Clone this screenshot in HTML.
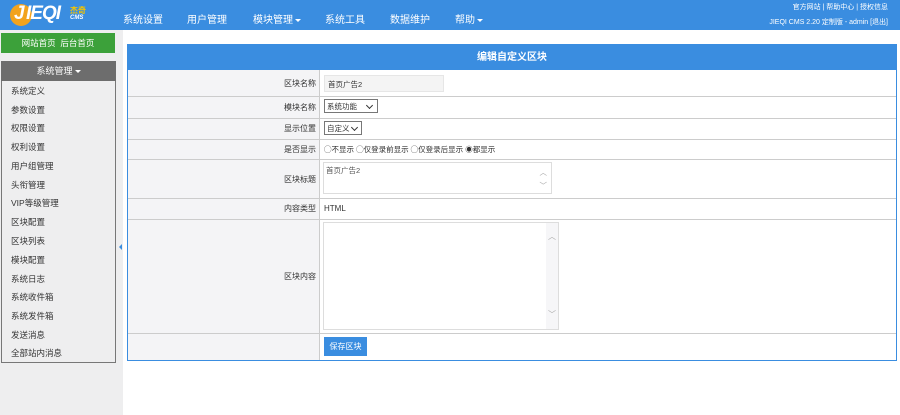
<!DOCTYPE html>
<html><head><meta charset="utf-8"><style>
*{margin:0;padding:0;box-sizing:border-box}
body{width:900px;height:415px;overflow:hidden;background:#fff;font-family:"Liberation Sans","Noto Sans CJK SC",sans-serif;font-size:8px;color:#333;position:relative}
.a{position:absolute}
#hd{left:0;top:0;width:900px;height:30px;background:#3a8de0;color:#fff}
.nav{top:11px;font-size:10px;color:#fff}
.caret{display:inline-block;border-left:3px solid transparent;border-right:3px solid transparent;border-top:3px solid #fff;vertical-align:middle;margin-left:2px}
#sb{left:0;top:30px;width:123px;height:385px;background:#eeeeef}
.mi{left:11px;font-size:8.5px;color:#333}
.lab{text-align:right;font-size:8px;color:#333}
.hl{left:128px;width:768px;height:1px;background:#ccc}
.sel{border:1px solid #777;font-size:7.5px;padding:1px 2px;background:#fff}
.ar{position:absolute;top:3px;width:5px;height:5px;border-right:1.3px solid #333;border-bottom:1.3px solid #333;transform:rotate(45deg)}
</style></head><body>
<div id="hd" class="a">
 <div class="a" style="left:10px;top:4px;width:22px;height:22px;border-radius:50%;background:#f2a31d"></div>
 <div class="a" style="left:14px;top:3px;font:italic bold 19px 'Liberation Sans',sans-serif;color:#fff">J</div>
 <div class="a" style="left:26px;top:3px;font:italic bold 19px 'Liberation Sans',sans-serif;color:#fff;letter-spacing:-1px">IEQI</div>
 <div class="a" style="left:70px;top:5px;font-size:8px;color:#f5c400;font-weight:bold">杰奇</div>
 <div class="a" style="left:70px;top:15px;font:italic bold 6px 'Liberation Sans',sans-serif;color:#fff">CMS</div>
 <div class="a nav" style="left:123px">系统设置</div>
 <div class="a nav" style="left:187px">用户管理</div>
 <div class="a nav" style="left:253px">模块管理<span class="caret"></span></div>
 <div class="a nav" style="left:325px">系统工具</div>
 <div class="a nav" style="left:390px">数据维护</div>
 <div class="a nav" style="left:455px">帮助<span class="caret"></span></div>
 <div class="a" style="right:12px;top:2px;font-size:7px">官方网站 | 帮助中心 | 授权信息</div>
 <div class="a" style="right:12px;top:17px;font-size:7px">JIEQI CMS 2.20 定制版 - admin [退出]</div>
</div>
<div id="sb" class="a"></div>
<div class="a" style="left:1px;top:33px;width:114px;height:20px;background:#3ca13a;color:#fff;font-size:8.5px;text-align:center;line-height:20px">网站首页&nbsp; 后台首页</div>
<div class="a" style="left:1px;top:61px;width:115px;height:302px;border:1px solid #777;border-top:0;background:#eeeeef"></div>
<div class="a" style="left:1px;top:61px;width:115px;height:20px;background:#6d6d6d;color:#fff;font-size:9px;text-align:center;line-height:20px">系统管理<span class="caret"></span></div>
<div class="a mi" style="top:85px">系统定义</div>
<div class="a mi" style="top:104px">参数设置</div>
<div class="a mi" style="top:122px">权限设置</div>
<div class="a mi" style="top:141px">权利设置</div>
<div class="a mi" style="top:160px">用户组管理</div>
<div class="a mi" style="top:179px">头衔管理</div>
<div class="a mi" style="top:197px">VIP等级管理</div>
<div class="a mi" style="top:216px">区块配置</div>
<div class="a mi" style="top:235px">区块列表</div>
<div class="a mi" style="top:254px">模块配置</div>
<div class="a mi" style="top:273px">系统日志</div>
<div class="a mi" style="top:291px">系统收件箱</div>
<div class="a mi" style="top:310px">系统发件箱</div>
<div class="a mi" style="top:329px">发送消息</div>
<div class="a mi" style="top:347px">全部站内消息</div>
<div class="a" style="left:119px;top:244px;border-top:3px solid transparent;border-bottom:3px solid transparent;border-right:3px solid #3a8de0"></div>

<div class="a" style="left:127px;top:44px;width:770px;height:317px;border:1px solid #3a8de0;background:#fff"></div>
<div class="a" style="left:128px;top:45px;width:768px;height:25px;background:#3a8de0;color:#fff;font-size:10px;font-weight:bold;text-align:center;line-height:26px">编辑自定义区块</div>
<div class="a" style="left:128px;top:70px;width:192px;height:290px;background:#f4f4f6;border-right:1px solid #ccc"></div>
<div class="a hl" style="top:96px"></div>
<div class="a hl" style="top:118px"></div>
<div class="a hl" style="top:139px"></div>
<div class="a hl" style="top:159px"></div>
<div class="a hl" style="top:198px"></div>
<div class="a hl" style="top:219px"></div>
<div class="a hl" style="top:333px"></div>

<div class="a lab" style="left:128px;width:188px;top:78px">区块名称</div>
<div class="a lab" style="left:128px;width:188px;top:102px">模块名称</div>
<div class="a lab" style="left:128px;width:188px;top:123px">显示位置</div>
<div class="a lab" style="left:128px;width:188px;top:144px">是否显示</div>
<div class="a lab" style="left:128px;width:188px;top:174px">区块标题</div>
<div class="a lab" style="left:128px;width:188px;top:203px">内容类型</div>
<div class="a lab" style="left:128px;width:188px;top:271px">区块内容</div>

<div class="a" style="left:324px;top:75px;width:120px;height:17px;background:#f4f4f4;border:1px solid #e6e6e6;padding:3px 3px;font-size:7.5px">首页广告2</div>
<div class="a sel" style="left:324px;top:99px;width:54px;height:14px">系统功能<span class="ar" style="right:5px"></span></div>
<div class="a sel" style="left:324px;top:121px;width:38px;height:14px">自定义<span class="ar" style="right:4px"></span></div>
<div class="a" style="left:324px;top:144px;font-size:7.5px">◯不显示 ◯仅登录前显示 ◯仅登录后显示 ◉都显示</div>
<div class="a" style="left:323px;top:162px;width:229px;height:32px;border:1px solid #ddd;font-size:7.5px;padding:2px;color:#555">首页广告2<span style="position:absolute;right:4px;top:4px;color:#aaa">︿</span><span style="position:absolute;right:4px;top:17px;color:#aaa">﹀</span></div>
<div class="a" style="left:324px;top:204px;font-size:8px">HTML</div>
<div class="a" style="left:323px;top:222px;width:236px;height:108px;border:1px solid #ddd"><div class="a" style="right:0;top:0;width:12px;height:106px;background:#f6f6f8"></div><span class="a" style="right:2px;top:8px;color:#aaa">︿</span><span class="a" style="right:2px;top:86px;color:#aaa">﹀</span></div>
<div class="a" style="left:324px;top:337px;width:43px;height:19px;background:#3a8de0;color:#fff;font-size:8px;text-align:center;line-height:19px">保存区块</div>
</body></html>
